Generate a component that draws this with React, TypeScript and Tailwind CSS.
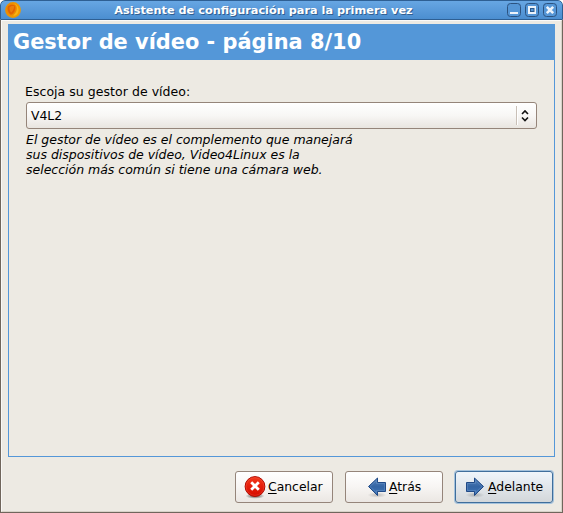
import React from "react";

function TitleButton({ children }: { children: React.ReactNode }) {
  return (
    <button className="h-[14px] w-[14px] shrink-0">
      <svg width="14" height="14" viewBox="0 0 14 14" className="block">
        <rect x="0.5" y="0.5" width="13" height="13" rx="3" fill="#5596d6" stroke="#2c5380" />
        {children}
      </svg>
    </button>
  );
}

function Arrow({ flip = false }: { flip?: boolean }) {
  return (
    <svg width="20" height="22" viewBox="0 0 20 22" className={flip ? "block -scale-x-100" : "block"}>
      <defs>
        <linearGradient id={flip ? "arrowB" : "arrowA"} x1="0" y1="0" x2="0" y2="1">
          <stop offset="0" stopColor="#5583bb" />
          <stop offset="0.5" stopColor="#3465a4" />
          <stop offset="1" stopColor="#4278b9" />
        </linearGradient>
        <radialGradient id={flip ? "shadeB" : "shadeA"}>
          <stop offset="0" stopColor="#000" stopOpacity="0.22" />
          <stop offset="1" stopColor="#000" stopOpacity="0" />
        </radialGradient>
      </defs>
      <ellipse cx="10" cy="19" rx="9.5" ry="2.8" fill={flip ? "url(#shadeB)" : "url(#shadeA)"} />
      <path
        d="M1.5 6.5H9.5V2L18.5 10.5L9.5 19.5V15.5H1.5Z"
        fill={flip ? "url(#arrowB)" : "url(#arrowA)"}
        stroke="#204a87"
        strokeLinejoin="round"
      />
      <path d="M2.5 7.5H10.5V4.5L17 10.5L10.5 16.5V14.5H2.5Z" fill="none" stroke="#83a9d8" strokeOpacity="0.3" />
    </svg>
  );
}

function CancelIcon() {
  return (
    <svg width="22" height="24" viewBox="0 0 22 24" className="block">
      <defs>
        <linearGradient id="cancelRed" x1="0" y1="0" x2="0" y2="1">
          <stop offset="0" stopColor="#f43a1c" />
          <stop offset="0.5" stopColor="#e51e0b" />
          <stop offset="1" stopColor="#d50c00" />
        </linearGradient>
        <radialGradient id="cancelShade">
          <stop offset="0" stopColor="#000" stopOpacity="0.7" />
          <stop offset="1" stopColor="#000" stopOpacity="0" />
        </radialGradient>
      </defs>
      <ellipse cx="11" cy="21" rx="9.5" ry="2.8" fill="url(#cancelShade)" />
      <circle cx="11" cy="11.5" r="9.9" fill="url(#cancelRed)" stroke="#b00a00" />
      <circle cx="11" cy="11.5" r="8.9" fill="none" stroke="#ff6b52" strokeOpacity="0.3" />
      <path d="M8.2 8.2L13.8 13.8M13.8 8.2L8.2 13.8" stroke="#fff" strokeWidth="2.8" strokeLinecap="square" />
    </svg>
  );
}

function Label({ text }: { text: string }) {
  return (
    <span className="mb-[2px] block text-[12.4px]">
      <span className="underline decoration-1 underline-offset-[2px]">{text[0]}</span>
      {text.slice(1)}
    </span>
  );
}

const buttonBase = "flex h-[32px] w-[98px] items-center rounded-[3px] border border-[#95857a]";
const plain = "bg-linear-to-b from-white via-[#f7f5f3] to-[#ebe7e3]";

export default function App() {
  return (
    <div className="flex h-[513px] w-[563px] flex-col overflow-hidden rounded-t-[5px] bg-[#edeae3] font-['DejaVu_Sans',sans-serif] text-[12.5px] leading-[15px] text-black">
      <header className="flex h-[20px] shrink-0 items-center rounded-t-[5px] border-x border-t border-b border-[#2e5f93] bg-linear-to-b from-[#67a6e3] to-[#4b8ed0] pr-[5px] pl-[4px]">
        <svg width="16" height="16" viewBox="0 0 16 16" className="shrink-0">
          <defs>
            <radialGradient id="appIcon" cx="0.4" cy="0.45">
              <stop offset="0" stopColor="#e87400" />
              <stop offset="0.55" stopColor="#ec8600" />
              <stop offset="1" stopColor="#ee9a00" />
            </radialGradient>
          </defs>
          <circle cx="8" cy="8" r="7.9" fill="url(#appIcon)" />
          <path d="M9 1.8C13 3 13 10 8 13.5C12 14.5 14.5 10 13.3 6C12.7 3.5 11 1.8 9 1.8Z" fill="#ffc21a" fillOpacity="0.7" />
          <path d="M2.8 4.5C4.5 2.6 7.5 2.2 10 3.4C11.3 7.4 8.5 11.5 6 12.8C3.2 11.3 2.2 7.5 2.8 4.5Z" fill="#d84800" fillOpacity="0.55" />
          <path d="M4.5 5.2C6 3.8 8 3.8 9.3 4.3C8.7 7.5 7.8 9.3 6.2 10.6C4.8 9 4.2 7 4.5 5.2Z" fill="#ef8a10" fillOpacity="0.7" />
        </svg>
        <div className="flex-1 pt-[2px] pr-[1px] text-center text-[11.3px] leading-[14px] font-bold whitespace-nowrap text-white [text-shadow:1px_1px_0_#315f91]">
          Asistente de configuración para la primera vez
        </div>
        <div className="flex gap-[4px]">
          <TitleButton>
            <rect x="3" y="9" width="8" height="2" fill="#edf3fa" />
          </TitleButton>
          <TitleButton>
            <rect x="3" y="3" width="8" height="8" fill="#edf3fa" />
            <rect x="5.5" y="5.5" width="3.5" height="3" fill="#5596d6" stroke="#2c5a8c" />
          </TitleButton>
          <TitleButton>
            <path d="M3.8 3.8L10.2 10.2M10.2 3.8L3.8 10.2" stroke="#edf3fa" strokeWidth="2.6" />
          </TitleButton>
        </div>
      </header>
      <main className="flex min-h-0 flex-1 flex-col border-x border-b border-[#70665c]">
        <div className="flex min-h-0 flex-1 flex-col border-t border-r border-b border-l border-t-[#faf9f7] border-r-[#d8d2c8] border-b-[#d8d2c8] border-l-[#faf9f7] pt-[3px] pr-[6px] pl-[6px]">
          <section className="flex h-[433px] w-[547px] shrink-0 flex-col border border-[#5497d8]">
            <h1 className="h-[35px] shrink-0 bg-[#5497d8] pl-[4px] text-[20.9px] leading-[34px] font-bold whitespace-nowrap text-white">
              Gestor de vídeo - página 8/10
            </h1>
            <div className="flex flex-col pt-[24px] pr-[17px] pl-[16px]">
              <label className="tracking-[0.04px] whitespace-nowrap">Escoja su gestor de vídeo:</label>
              <div className="mt-[3px] ml-[1px] flex h-[27px] w-[511px] items-center rounded-[3px] border border-[#95857a] bg-linear-to-b from-white from-0% via-[#f8f7f5] via-50% to-[#e9e5e0] pl-[4px]">
                <span className="flex-1 text-[12.4px]">V4L2</span>
                <span className="h-[19px] w-[2px] border-l border-[#c9c0b7] bg-white" />
                <svg width="18" height="14" viewBox="0 0 18 14" className="block">
                  <path d="M4 5L7 2L10 5M4 8.5L7 11.5L10 8.5" fill="none" stroke="#111" strokeWidth="1.6" />
                </svg>
              </div>
              <p className="mt-[3px] pl-[1px] leading-[15px] tracking-[-0.01px] whitespace-nowrap italic">
                El gestor de vídeo es el complemento que manejará
                <br />
                sus dispositivos de vídeo, Video4Linux es la
                <br />
                selección más común si tiene una cámara web.
              </p>
            </div>
          </section>
          <footer className="mt-[14px] flex justify-end gap-[12px] pr-[2px]">
            <button className={`${buttonBase} ${plain} pl-[8px]`}>
              <CancelIcon />
              <span className="ml-[2px]">
                <Label text="Cancelar" />
              </span>
            </button>
            <button className={`${buttonBase} ${plain} pl-[21px]`}>
              <Arrow flip />
              <span className="ml-[2px]">
                <Label text="Atrás" />
              </span>
            </button>
            <button className="flex h-[32px] w-[98px] items-center rounded-[3px] border border-[#3f6e9c] bg-linear-to-b from-[#eff5fb] to-[#d3d7da] pl-[9px] shadow-[0_0_0_1px_#a4c2dc]">
              <Arrow />
              <span className="ml-[3px]">
                <Label text="Adelante" />
              </span>
            </button>
          </footer>
        </div>
      </main>
    </div>
  );
}
